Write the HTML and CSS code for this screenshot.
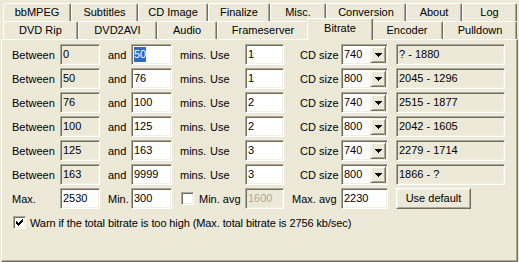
FILE: index.html
```html
<!DOCTYPE html>
<html lang="en">

<head>
    <meta charset="UTF-8">
    <title>Bitrate</title>
    <link rel="stylesheet" href="styles.css">
</head>

<body>

    <div class="tabs">
        <div class="tab-row">
            <div class="tab" style="width: 68px">bbMPEG</div>
            <div class="tab" style="width: 67px">Subtitles</div>
            <div class="tab" style="width: 70px">CD Image</div>
            <div class="tab" style="width: 62px">Finalize</div>
            <div class="tab" style="width: 56px">Misc.</div>
            <div class="tab" style="width: 80px">Conversion</div>
            <div class="tab" style="width: 56px">About</div>
            <div class="tab" style="width: 55px">Log</div>
        </div>
        <div class="tab-row">
            <div class="tab" style="width: 75px">DVD Rip</div>
            <div class="tab" style="width: 79px">DVD2AVI</div>
            <div class="tab" style="width: 60px">Audio</div>
            <div class="tab" style="width: 92px">Frameserver</div>
            <div class="tab active" style="width: 66px">Bitrate</div>
            <div class="tab" style="width: 72px">Encoder</div>
            <div class="tab" style="width: 74px">Pulldown</div>
        </div>
    </div>

    <div class="panel">
        <div class="row">
            <span>Between</span>
            <div class="field readonly">0</div>
            <span class="pad">and</span>
            <div class="field"><span class="selected">50</span></div>
            <span class="pad">mins.</span>
            <span>Use</span>
            <div class="field">1</div>
            <span class="pad-wide">CD size</span>
            <div class="combo"><span class="combo-value">740</span><span class="drop"><svg width="7" height="4" shape-rendering="crispEdges"><path d="M0 0h7v1h-1v1h-1v1h-1v1h-1v-1h-1v-1h-1v-1h-1z" fill="#000"/></svg></span></div>
            <span></span>
            <div class="field readonly">? - 1880</div>
        </div>
        <div class="row">
            <span>Between</span>
            <div class="field readonly">50</div>
            <span class="pad">and</span>
            <div class="field">76</div>
            <span class="pad">mins.</span>
            <span>Use</span>
            <div class="field">1</div>
            <span class="pad-wide">CD size</span>
            <div class="combo"><span class="combo-value">800</span><span class="drop"><svg width="7" height="4" shape-rendering="crispEdges"><path d="M0 0h7v1h-1v1h-1v1h-1v1h-1v-1h-1v-1h-1v-1h-1z" fill="#000"/></svg></span></div>
            <span></span>
            <div class="field readonly">2045 - 1296</div>
        </div>
        <div class="row">
            <span>Between</span>
            <div class="field readonly">76</div>
            <span class="pad">and</span>
            <div class="field">100</div>
            <span class="pad">mins.</span>
            <span>Use</span>
            <div class="field">2</div>
            <span class="pad-wide">CD size</span>
            <div class="combo"><span class="combo-value">740</span><span class="drop"><svg width="7" height="4" shape-rendering="crispEdges"><path d="M0 0h7v1h-1v1h-1v1h-1v1h-1v-1h-1v-1h-1v-1h-1z" fill="#000"/></svg></span></div>
            <span></span>
            <div class="field readonly">2515 - 1877</div>
        </div>
        <div class="row">
            <span>Between</span>
            <div class="field readonly">100</div>
            <span class="pad">and</span>
            <div class="field">125</div>
            <span class="pad">mins.</span>
            <span>Use</span>
            <div class="field">2</div>
            <span class="pad-wide">CD size</span>
            <div class="combo"><span class="combo-value">800</span><span class="drop"><svg width="7" height="4" shape-rendering="crispEdges"><path d="M0 0h7v1h-1v1h-1v1h-1v1h-1v-1h-1v-1h-1v-1h-1z" fill="#000"/></svg></span></div>
            <span></span>
            <div class="field readonly">2042 - 1605</div>
        </div>
        <div class="row">
            <span>Between</span>
            <div class="field readonly">125</div>
            <span class="pad">and</span>
            <div class="field">163</div>
            <span class="pad">mins.</span>
            <span>Use</span>
            <div class="field">3</div>
            <span class="pad-wide">CD size</span>
            <div class="combo"><span class="combo-value">740</span><span class="drop"><svg width="7" height="4" shape-rendering="crispEdges"><path d="M0 0h7v1h-1v1h-1v1h-1v1h-1v-1h-1v-1h-1v-1h-1z" fill="#000"/></svg></span></div>
            <span></span>
            <div class="field readonly">2279 - 1714</div>
        </div>
        <div class="row">
            <span>Between</span>
            <div class="field readonly">163</div>
            <span class="pad">and</span>
            <div class="field">9999</div>
            <span class="pad">mins.</span>
            <span>Use</span>
            <div class="field">3</div>
            <span class="pad-wide">CD size</span>
            <div class="combo"><span class="combo-value">800</span><span class="drop"><svg width="7" height="4" shape-rendering="crispEdges"><path d="M0 0h7v1h-1v1h-1v1h-1v1h-1v-1h-1v-1h-1v-1h-1z" fill="#000"/></svg></span></div>
            <span></span>
            <div class="field readonly">1866 - ?</div>
        </div>

        <div class="row limits">
            <span>Max.</span>
            <div class="field">2530</div>
            <span class="pad">Min.</span>
            <div class="field">300</div>
            <div class="check-cell">
                <span class="checkbox"></span>
                <span>Min. avg</span>
            </div>
            <div class="field disabled">1600</div>
            <span class="pad">Max. avg</span>
            <div class="field">2230</div>
            <span></span>
            <div class="button">Use default</div>
        </div>

        <div class="warn">
            <span class="checkbox"><svg width="9" height="9" shape-rendering="crispEdges"><path d="M1 3h1v3h-1zM2 4h1v3h-1zM3 5h1v3h-1zM4 4h1v3h-1zM5 3h1v3h-1zM6 2h1v3h-1zM7 1h1v3h-1z" fill="#000"/></svg></span>
            <span class="warn-text">Warn if the total bitrate is too high (Max. total bitrate is 2756 kb/sec)</span>
        </div>
    </div>

</body>

</html>
```

FILE: styles.css
```css
body {
    margin: 0;
    background-color: #ece9d8;
    font-family: "Liberation Sans", Arial, sans-serif;
    font-size: 11px;
    color: #000;
}

.tabs {
    padding: 3px 0 0 3px;
}

.tab-row {
    display: flex;
    height: 18px;
}

.tab {
    box-sizing: border-box;
    height: 18px;
    border-top: 1px solid #fff;
    border-left: 1px solid #fff;
    border-right: 1px solid #716f64;
    border-radius: 2px 2px 0 0;
    box-shadow: inset -1px 0 #aca899;
    background-color: #ece9d8;
    text-align: center;
    line-height: 17px;
    white-space: nowrap;
}

.tab.active {
    position: relative;
    z-index: 1;
    height: 22px;
    margin: -3px -2px -1px -2px;
    line-height: 19px;
}

.panel {
    box-sizing: border-box;
    width: 517px;
    height: 223px;
    margin-left: 1px;
    padding: 4px 0 0 10px;
    border-top: 1px solid #fff;
    border-left: 1px solid #fff;
    border-right: 1px solid #716f64;
    border-bottom: 1px solid #716f64;
    box-shadow: inset -1px -1px #aca899;
}

.row {
    display: grid;
    grid-template-columns: 48px 40px 31px 41px 38px 35px 39px 57px 47px 8px 109px;
    align-items: center;
    height: 21px;
    margin-bottom: 3px;
    white-space: nowrap;
}

.pad {
    padding-left: 8px;
}

.pad-wide {
    padding-left: 16px;
}

.field {
    box-sizing: border-box;
    height: 21px;
    padding: 0 2px;
    border: 1px solid;
    border-color: #aca899 #fff #fff #aca899;
    box-shadow: inset 1px 1px #716f64, inset -1px -1px #f1efe2;
    background-color: #fff;
    line-height: 19px;
    overflow: hidden;
}

.field.readonly,
.field.disabled {
    background-color: #ece9d8;
}

.field.disabled {
    color: #aca899;
}

.selected {
    display: inline-block;
    line-height: 15px;
    background-color: #316ac5;
    color: #fff;
}

.combo {
    box-sizing: border-box;
    display: flex;
    height: 21px;
    padding: 1px;
    border: 1px solid;
    border-color: #aca899 #fff #fff #aca899;
    box-shadow: inset 1px 1px #716f64, inset -1px -1px #f1efe2;
    background-color: #fff;
}

.combo-value {
    flex: 1;
    padding-left: 1px;
    line-height: 17px;
}

.drop {
    box-sizing: border-box;
    display: flex;
    align-items: center;
    justify-content: center;
    width: 16px;
    height: 17px;
    border: 1px solid;
    border-color: #f1efe2 #716f64 #716f64 #f1efe2;
    box-shadow: inset 1px 1px #fff, inset -1px -1px #aca899;
    background-color: #ece9d8;
}

.limits {
    margin-top: 2px;
}

.check-cell {
    grid-column: span 2;
    display: flex;
    align-items: center;
    gap: 5px;
    padding-left: 9px;
}

.checkbox {
    box-sizing: border-box;
    display: inline-flex;
    align-items: center;
    justify-content: center;
    width: 13px;
    height: 13px;
    border: 1px solid;
    border-color: #aca899 #fff #fff #aca899;
    box-shadow: inset 1px 1px #716f64, inset -1px -1px #f1efe2;
    background-color: #fff;
}

.button {
    box-sizing: border-box;
    width: 75px;
    height: 21px;
    border: 1px solid;
    border-color: #fff #716f64 #716f64 #fff;
    box-shadow: inset 1px 1px #f1efe2, inset -1px -1px #aca899;
    text-align: center;
    line-height: 19px;
}

.warn {
    display: flex;
    align-items: center;
    gap: 4px;
    margin-top: 7px;
    padding-left: 1px;
}

.warn-text {
    letter-spacing: -0.1px;
}
```
